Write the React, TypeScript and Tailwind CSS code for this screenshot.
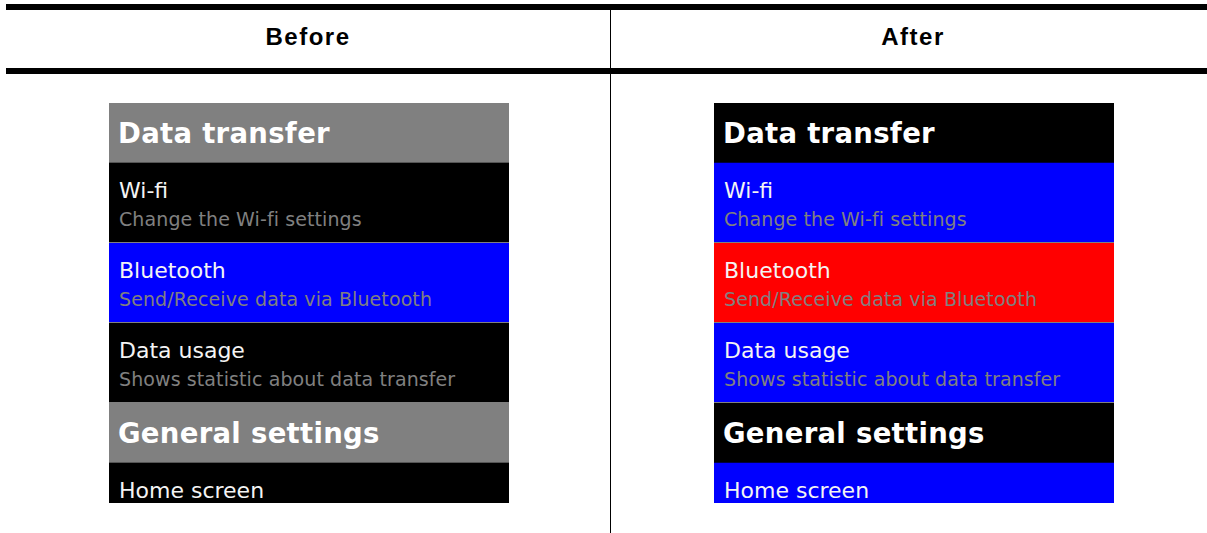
import React from "react";

type Item = { title: string; desc?: string };
type Row = { kind: "header"; text: string } | ({ kind: "item" } & Item);

const rows: Row[] = [
  { kind: "header", text: "Data transfer" },
  { kind: "item", title: "Wi-fi", desc: "Change the Wi-fi settings" },
  { kind: "item", title: "Bluetooth", desc: "Send/Receive data via Bluetooth" },
  { kind: "item", title: "Data usage", desc: "Shows statistic about data transfer" },
  { kind: "header", text: "General settings" },
  { kind: "item", title: "Home screen" },
];

const font = { fontFamily: '"DejaVu Sans", "Liberation Sans", sans-serif' };

function Panel({ after }: { after: boolean }) {
  return (
    <div className="w-[400px] h-[400px] overflow-hidden flex flex-col" style={font}>
      {rows.map((r, i) => {
        if (r.kind === "header") {
          return (
            <div key={i} className="flex flex-col shrink-0">
              <div
                className={
                  "h-[59px] pl-[9px] pt-[16px] text-white font-bold text-[27.5px] leading-[28px] tracking-[0.3px] " +
                  (after ? "bg-black" : "bg-[#808080]")
                }
              >
                {r.text}
              </div>
              <div className={"h-px " + (after ? "bg-[#000040]" : "bg-[#555555]")} />
            </div>
          );
        }
        const selected = r.title === "Bluetooth";
        const bg = after ? (selected ? "bg-[#ff0000]" : "bg-[#0000ff]") : selected ? "bg-[#0000ff]" : "bg-black";
        return (
          <div key={i} className="flex flex-col shrink-0">
            <div className={"h-[79px] pl-[10px] pt-[17px] " + bg}>
              <div className="text-[22px] leading-[22px] text-[#f4f4f4]">{r.title}</div>
              {r.desc && (
                <div className="mt-[8px] text-[19px] leading-[19px] tracking-[0.1px] text-[#808080]">{r.desc}</div>
              )}
            </div>
            <div className="h-px bg-[#808080]" />
          </div>
        );
      })}
    </div>
  );
}

export default function App() {
  const head = { fontFamily: '"Liberation Sans", Arial, sans-serif' };
  return (
    <div className="w-[1207px] h-[533px] overflow-hidden bg-white pt-[4px]">
      <div className="ml-[6px] w-[1209px] flex flex-col">
        <div className="h-[6px] bg-black" />
        <div className="flex h-[58px]">
          <div
            className="w-[604px] flex items-center justify-center pb-[4px] font-bold text-[24px] tracking-[1.5px] text-black"
            style={head}
          >
            Before
          </div>
          <div className="w-px bg-black" />
          <div
            className="w-[604px] flex items-center justify-center pb-[4px] font-bold text-[24px] tracking-[1.5px] text-black"
            style={head}
          >
            After
          </div>
        </div>
        <div className="h-[6px] bg-black" />
        <div className="flex h-[459px]">
          <div className="w-[604px] pl-[103px] pt-[29px]">
            <Panel after={false} />
          </div>
          <div className="w-px bg-black" />
          <div className="w-[604px] pl-[103px] pt-[29px]">
            <Panel after={true} />
          </div>
        </div>
      </div>
    </div>
  );
}
